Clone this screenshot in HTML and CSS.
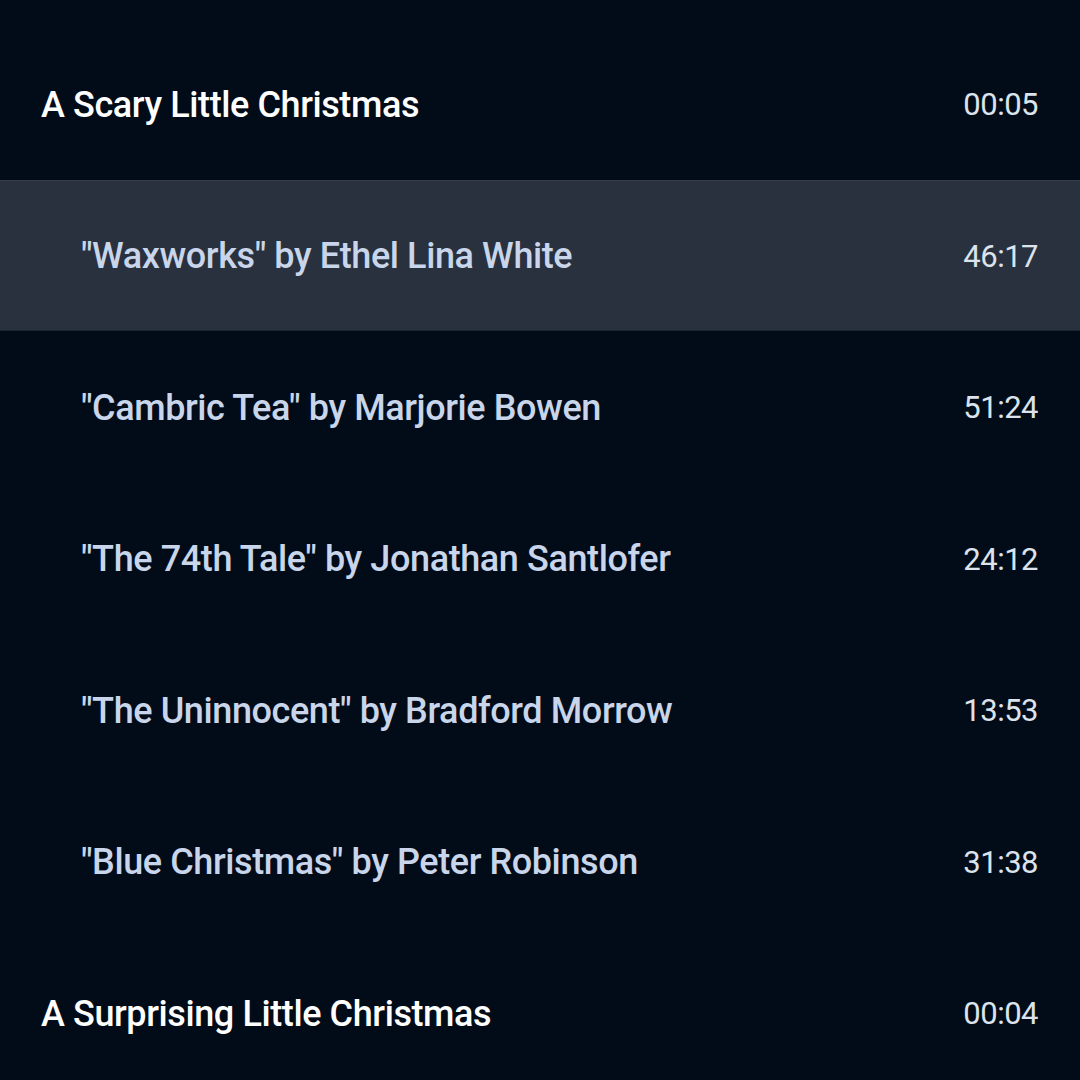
FILE: index.html
```html
<!DOCTYPE html>
<html lang="en">
<head>
    <meta charset="UTF-8">
    <title>Chapters</title>
    <link rel="stylesheet" href="styles.css">
</head>
<body>
<ul class="chapters">
    <li class="chapter"><span class="name">A Scary Little Christmas</span><span class="time">00:05</span></li>
    <li class="track current"><span class="name">"Waxworks" by Ethel Lina White</span><span class="time">46:17</span></li>
    <li class="track"><span class="name">"Cambric Tea" by Marjorie Bowen</span><span class="time">51:24</span></li>
    <li class="track"><span class="name">"The 74th Tale" by Jonathan Santlofer</span><span class="time">24:12</span></li>
    <li class="track"><span class="name">"The Uninnocent" by Bradford Morrow</span><span class="time">13:53</span></li>
    <li class="track"><span class="name">"Blue Christmas" by Peter Robinson</span><span class="time">31:38</span></li>
    <li class="chapter"><span class="name">A Surprising Little Christmas</span><span class="time">00:04</span></li>
</ul>
</body>
</html>
```

FILE: styles.css
```css
html,body,ul,li{margin:0;padding:0;}
ul{list-style-type:none;}
body{background:#020c18;height:1080px;overflow:hidden;font-family:Roboto,"Liberation Sans",sans-serif;}
.chapters{padding-top:28px;}
.chapters li{display:flex;align-items:center;justify-content:space-between;height:151.5px;box-sizing:border-box;padding:2px 42px 0 41px;}
.chapters .name{font-size:36px;font-weight:500;letter-spacing:-0.4px;}
.chapters .time{font-size:31px;font-weight:400;letter-spacing:-0.5px;color:#dce3ec;}
.chapter .name{color:#fff;}
.track{padding-left:81px !important;}
.track .name{color:#c8d5ea;}
.track.current{background:#28313d;border-top:1px solid #343d49;border-bottom:1px solid #1c2430;}
```
